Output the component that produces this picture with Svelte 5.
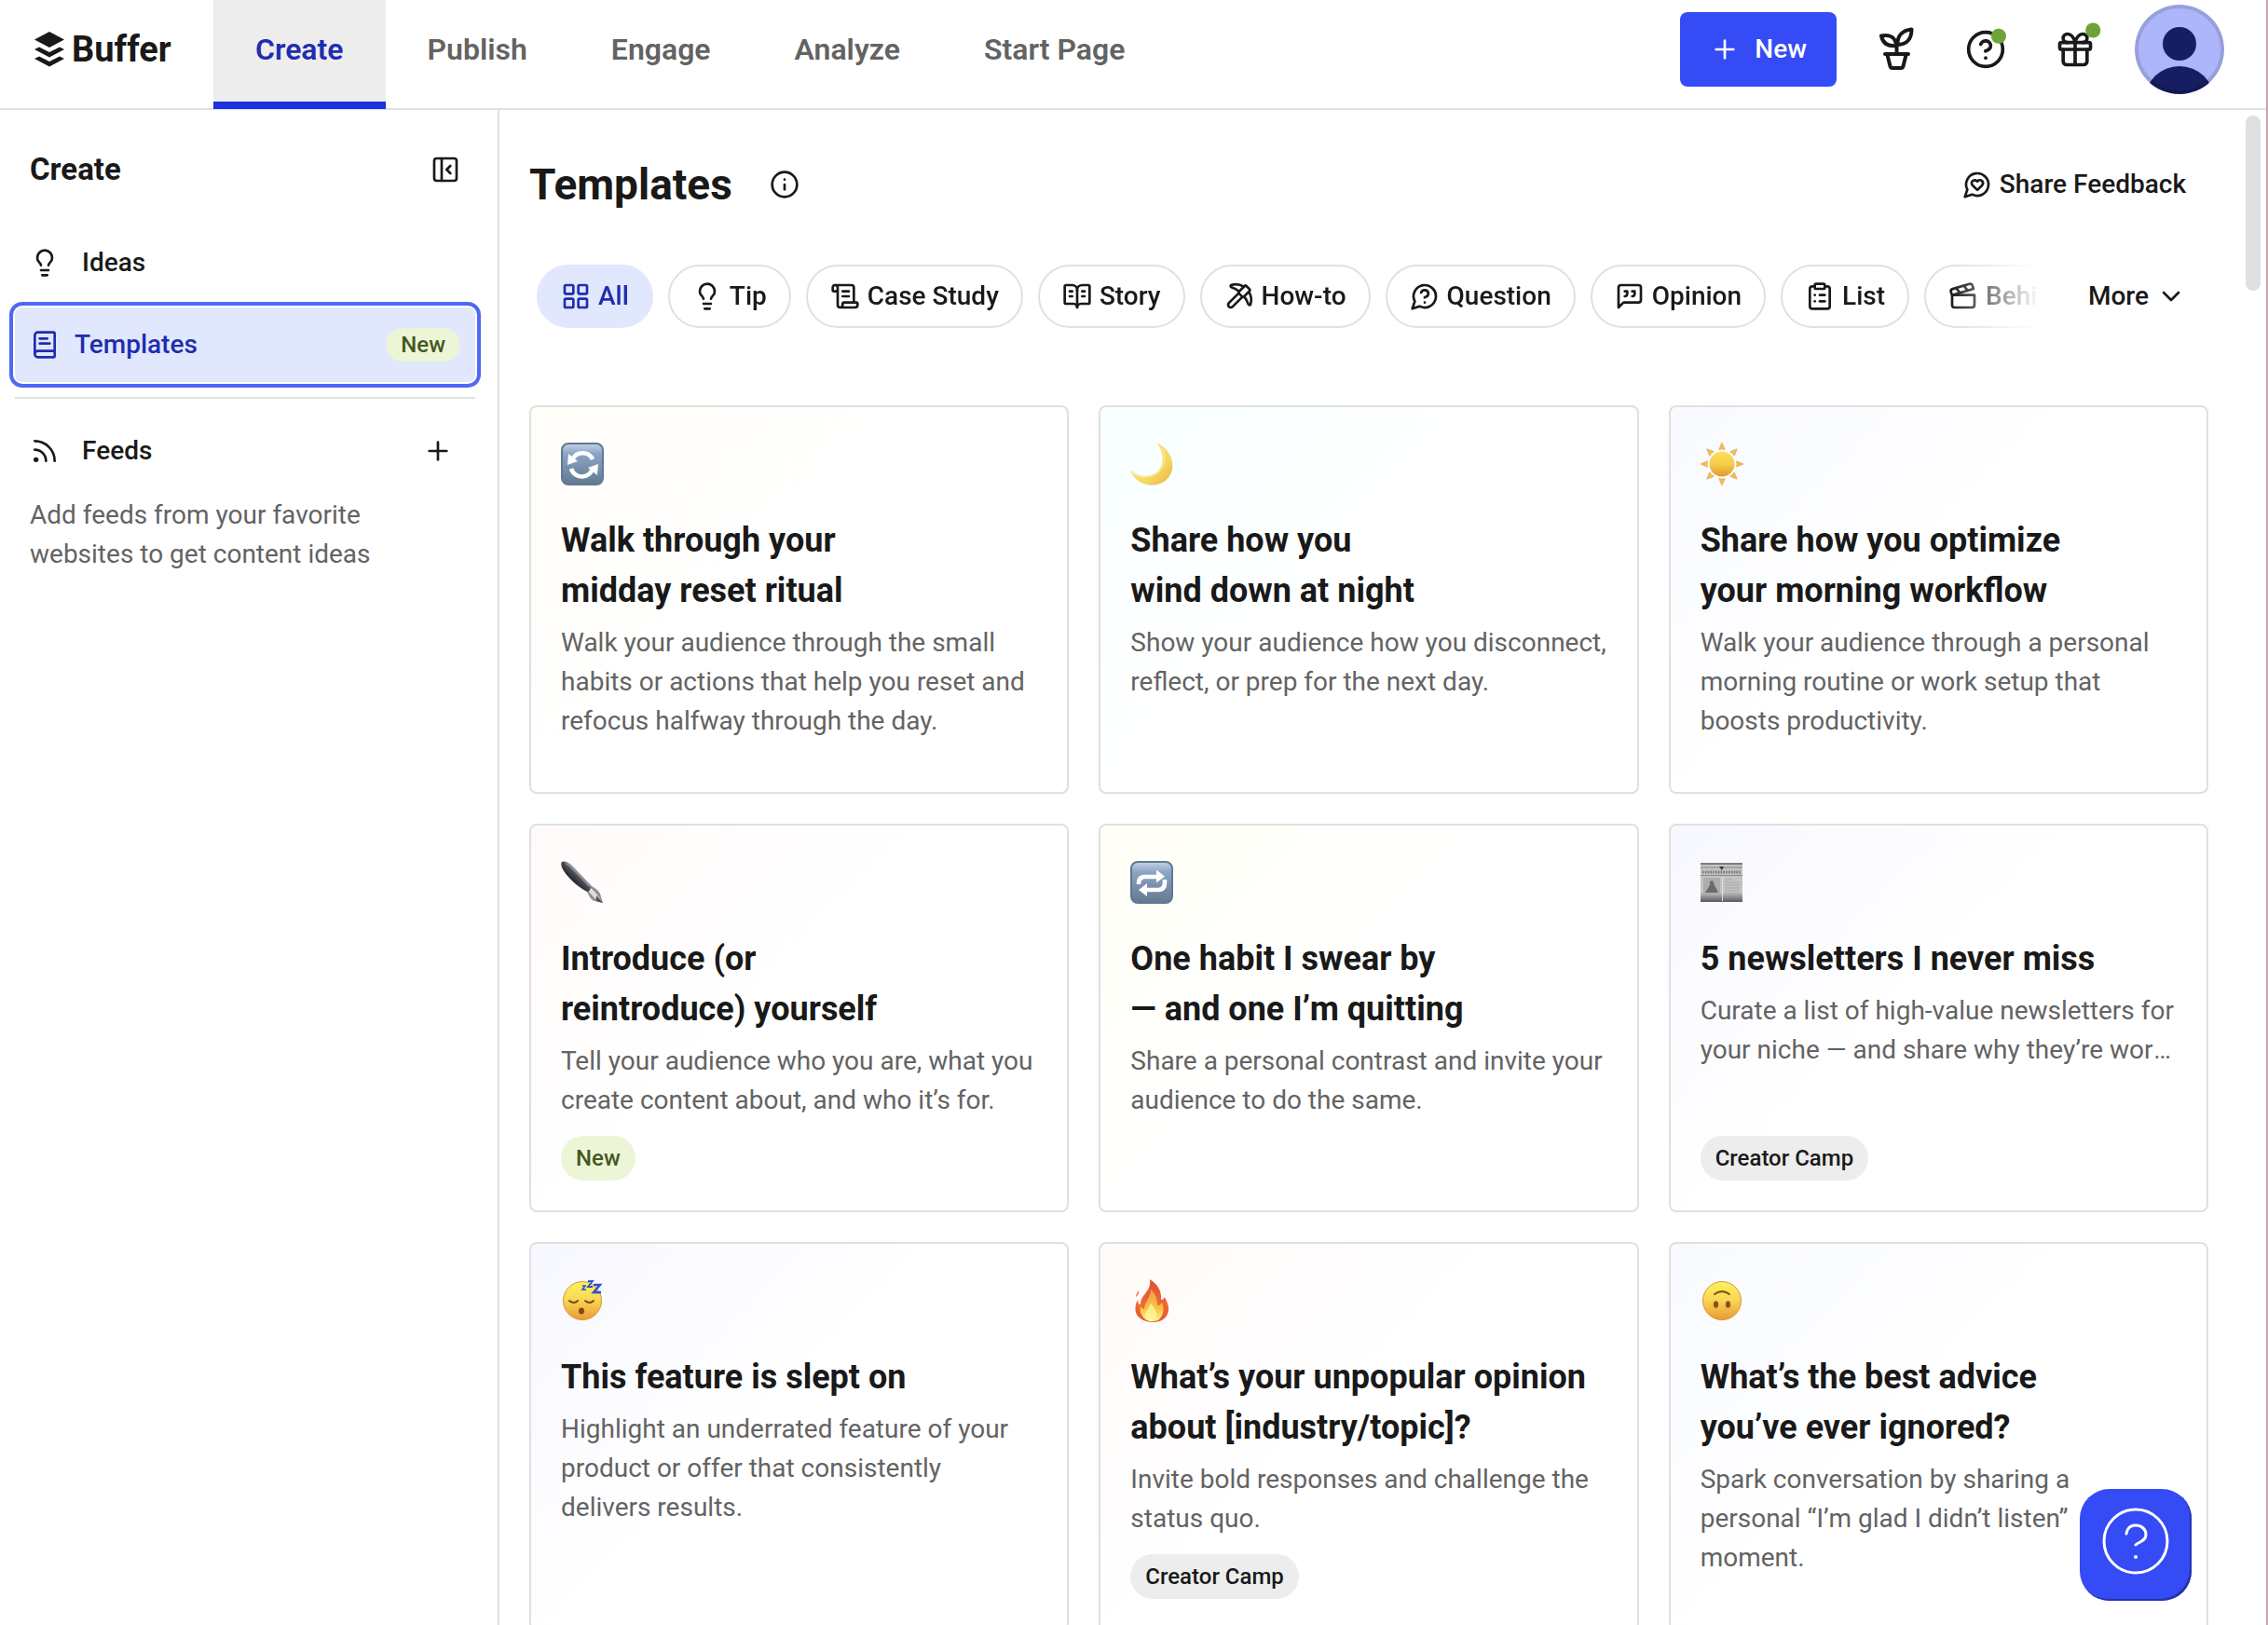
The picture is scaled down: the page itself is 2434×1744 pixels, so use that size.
<script>
  const tabs = ['Create', 'Publish', 'Engage', 'Analyze', 'Start Page'];

  const icons = {
    grid: '<rect x="3" y="3" width="7" height="7" rx="1"/><rect x="14" y="3" width="7" height="7" rx="1"/><rect x="14" y="14" width="7" height="7" rx="1"/><rect x="3" y="14" width="7" height="7" rx="1"/>',
    bulb: '<path d="M15 14c.2-1 .7-1.7 1.5-2.5 1-.9 1.5-2.2 1.5-3.5A6 6 0 0 0 6 8c0 1 .2 2.2 1.5 3.5.7.7 1.3 1.5 1.5 2.5"/><path d="M9 18h6"/><path d="M10 22h4"/>',
    scroll: '<path d="M15 12h-5"/><path d="M15 8h-5"/><path d="M19 17V5a2 2 0 0 0-2-2H4"/><path d="M8 21h12a2 2 0 0 0 2-2v-1a1 1 0 0 0-1-1H11a1 1 0 0 0-1 1v1a2 2 0 1 1-4 0V5a2 2 0 1 0-4 0v2a1 1 0 0 0 1 1h3"/>',
    book: '<path d="M12 7v14"/><path d="M16 12h2"/><path d="M16 8h2"/><path d="M6 12h2"/><path d="M6 8h2"/><path d="M3 18a1 1 0 0 1-1-1V4a1 1 0 0 1 1-1h5a4 4 0 0 1 4 4 4 4 0 0 1 4-4h5a1 1 0 0 1 1 1v13a1 1 0 0 1-1 1h-6a3 3 0 0 0-3 3 3 3 0 0 0-3-3z"/>',
    pickaxe: '<path d="M14.531 12.469 6.619 20.38a1 1 0 1 1-3-3l7.912-7.912"/><path d="M15.686 4.314A12.5 12.5 0 0 0 5.461 2.958 1 1 0 0 0 5.58 4.71a22 22 0 0 1 6.318 3.393"/><path d="M17.7 3.7a1 1 0 0 0-1.4 0l-4.6 4.6a1 1 0 0 0 0 1.4l2.6 2.6a1 1 0 0 0 1.4 0l4.6-4.6a1 1 0 0 0 0-1.4z"/><path d="M19.686 8.314a12.501 12.501 0 0 1 1.356 10.225 1 1 0 0 1-1.751-.119 22 22 0 0 0-3.393-6.319"/>',
    question: '<path d="M7.9 20A9 9 0 1 0 4 16.1L2 22Z"/><path d="M9.09 9a3 3 0 0 1 5.83 1c0 2-3 3-3 3"/><path d="M12 17h.01"/>',
    quote: '<path d="M21 15a2 2 0 0 1-2 2H7l-4 4V5a2 2 0 0 1 2-2h14a2 2 0 0 1 2 2z"/><path d="M8 12a2 2 0 0 0 2-2V8H8"/><path d="M14 12a2 2 0 0 0 2-2V8h-2"/>',
    list: '<rect x="8" y="2" width="8" height="4" rx="1"/><path d="M16 4h2a2 2 0 0 1 2 2v14a2 2 0 0 1-2 2H6a2 2 0 0 1-2-2V6a2 2 0 0 1 2-2h2"/><path d="M12 11h4"/><path d="M12 16h4"/><path d="M8 11h.01"/><path d="M8 16h.01"/>',
    clapper: '<path d="M20.2 6 3 11l-.9-2.4c-.3-1.1.3-2.2 1.3-2.5l13.5-4c1.1-.3 2.2.3 2.5 1.3Z"/><path d="m6.2 5.3 3.1 3.9"/><path d="m12.4 3.4 3.1 4"/><path d="M3 11h18v8a2 2 0 0 1-2 2H5a2 2 0 0 1-2-2Z"/>',
    heart: '<path d="M7.9 20A9 9 0 1 0 4 16.1L2 22Z"/><path d="M15.8 9.2a2.5 2.5 0 0 0-3.5 0l-.3.4-.35-.3a2.42 2.42 0 1 0-3.2 3.6l3.6 3.5 3.6-3.5c1.2-1.2 1.1-2.7.2-3.7"/>',
    chevron: '<path d="m6 9 6 6 6-6"/>',
    info: '<circle cx="12" cy="12" r="10"/><path d="M12 16v-4"/><path d="M12 8h.01"/>',
    collapse: '<rect x="3" y="3" width="18" height="18" rx="2"/><path d="M9 3v18"/><path d="m16 9-3 3 3 3"/>',
    template: '<path d="M4 19.5v-15A2.5 2.5 0 0 1 6.5 2H19a1 1 0 0 1 1 1v18a1 1 0 0 1-1 1H6.5a2.5 2.5 0 0 1-2.5-2.5 2.5 2.5 0 0 1 2.5-2.5H20"/><path d="M8 11h8"/><path d="M8 7h6"/>',
    rss: '<path d="M4 11a9 9 0 0 1 9 9"/><path d="M4 4a16 16 0 0 1 16 16"/><circle cx="5" cy="19" r="1"/>',
    plus: '<path d="M5 12h14"/><path d="M12 5v14"/>',
    gift: '<rect x="3" y="8" width="18" height="4" rx="1"/><path d="M12 8v13"/><path d="M19 12v7a2 2 0 0 1-2 2H7a2 2 0 0 1-2-2v-7"/><path d="M7.5 8a2.5 2.5 0 0 1 0-5A4.8 8 0 0 1 12 8a4.8 8 0 0 1 4.5-5 2.5 2.5 0 0 1 0 5"/>',
    help: '<circle cx="12" cy="12" r="10"/><path d="M9.09 9a3 3 0 0 1 5.83 1c0 2-3 3-3 3"/><path d="M12 17h.01"/>'
  };

  const filters = [
    { label: 'All', icon: 'grid', active: true },
    { label: 'Tip', icon: 'bulb' },
    { label: 'Case Study', icon: 'scroll' },
    { label: 'Story', icon: 'book' },
    { label: 'How-to', icon: 'pickaxe' },
    { label: 'Question', icon: 'question' },
    { label: 'Opinion', icon: 'quote' },
    { label: 'List', icon: 'list' },
    { label: 'Behind', icon: 'clapper' }
  ];

  const cards = [
    { art: 'refresh', tint: 'cream', title: ['Walk through your', 'midday reset ritual'], text: 'Walk your audience through the small habits or actions that help you reset and refocus halfway through the day.' },
    { art: 'moon', tint: 'aqua', title: ['Share how you', 'wind down at night'], text: 'Show your audience how you disconnect, reflect, or prep for the next day.' },
    { art: 'sun', tint: 'sky', title: ['Share how you optimize', 'your morning workflow'], text: 'Walk your audience through a personal morning routine or work setup that boosts productivity.' },
    { art: 'pen', tint: 'rose', title: ['Introduce (or', 'reintroduce) yourself'], text: 'Tell your audience who you are, what you create content about, and who it’s for.', badge: 'New', clamp: true },
    { art: 'repeat', tint: 'lemon', title: ['One habit I swear by', '— and one I’m quitting'], text: 'Share a personal contrast and invite your audience to do the same.' },
    { art: 'news', tint: 'lilac', title: ['5 newsletters I never miss'], text: 'Curate a list of high-value newsletters for your niche — and share why they’re worth following every week.', badge: 'Creator Camp', clamp: true },
    { art: 'sleep', tint: 'lilac', title: ['This feature is slept on'], text: 'Highlight an underrated feature of your product or offer that consistently delivers results.' },
    { art: 'fire', tint: 'rose', title: ['What’s your unpopular opinion', 'about [industry/topic]?'], text: 'Invite bold responses and challenge the status quo.', badge: 'Creator Camp', clamp: true },
    { art: 'upside', tint: 'sky', title: ['What’s the best advice', 'you’ve ever ignored?'], text: 'Spark conversation by sharing a personal “I’m glad I didn’t listen” moment.' }
  ];
</script>

{#snippet icon(name)}
  <svg class="icon" viewBox="0 0 24 24" aria-hidden="true">{@html icons[name]}</svg>
{/snippet}

{#snippet art(name)}
  <svg class="art" viewBox="0 0 46 46" aria-hidden="true">
    {#if name === 'refresh' || name === 'repeat'}
      <defs>
        <linearGradient id="tile-{name}" x1="0" y1="0" x2="0" y2="1">
          <stop offset="0" stop-color="#c3d3e4" /><stop offset=".25" stop-color="#8aa5c5" /><stop offset="1" stop-color="#64788f" />
        </linearGradient>
      </defs>
      <rect x="1" y="1" width="44" height="44" rx="7" fill="url(#tile-{name})" stroke="#5f7896" stroke-width="2" />
      {#if name === 'refresh'}
        <g fill="none" stroke="#fff" stroke-width="4.6">
          <path d="M12 19a12 12 0 0 1 22-1" /><path d="M34 28a12 12 0 0 1-23 0" />
        </g>
        <path d="M8 12l-1 12 11-4z" fill="#fff" /><path d="M39 35l1-12-11 4z" fill="#fff" />
      {:else}
        <g fill="none" stroke="#fff" stroke-width="4.6">
          <path d="M9 25v-1q0-7 7-7h13" /><path d="M37 20v3q0 8-7 8H18" />
        </g>
        <path d="M28 9.500l9 7-9 7z" fill="#fff" /><path d="M18 38l-9-7 9-7z" fill="#fff" />
      {/if}
    {:else if name === 'moon'}
      <defs>
        <linearGradient id="moon" x1="0" y1="0" x2="1" y2="1">
          <stop offset=".3" stop-color="#f7e07c" /><stop offset=".65" stop-color="#f6d85f" /><stop offset="1" stop-color="#e3b04a" />
        </linearGradient>
      </defs>
      <path d="M28.500 0C41 6 47 18 45 29c-2.500 11-13 18-25 16.500C10 44 3 38 0 29.500c9 8 22 9 30 1 7-8 6-20-1.500-30.500z" fill="url(#moon)" />
      <path d="M2 32c9 7 21 6 29-1 6-7 7-17 3-25" fill="none" stroke="#fbf0a8" stroke-width="1.5" opacity=".7" />
    {:else if name === 'sun'}
      <defs>
        <linearGradient id="sun" x1="0" y1="0" x2="0" y2="1">
          <stop offset="0" stop-color="#fbe35b" /><stop offset=".5" stop-color="#f5cd4c" /><stop offset="1" stop-color="#e2962f" />
        </linearGradient>
      </defs>
      <circle cx="23" cy="23" r="13.5" fill="url(#sun)" />
      {#each [0, 45, 90, 135, 180, 225, 270, 315] as angle}
        <path d="M23 0l3.200 7.500q-3.200-1.200-6.400 0z" fill="#f3c044" stroke="#e09a4a" stroke-width=".6" transform="rotate({angle} 23 23)" />
      {/each}
    {:else if name === 'pen'}
      <defs>
        <linearGradient id="pen" x1="0" y1="1" x2="1" y2="0">
          <stop offset=".3" stop-color="#14161a" /><stop offset=".52" stop-color="#4b4f56" /><stop offset=".62" stop-color="#b9bcc2" /><stop offset=".72" stop-color="#26292e" />
        </linearGradient>
      </defs>
      <path d="M1 1C6-1 12 4 17 10l16 17c1 2-2 7-5 6C18 28 5 16 1 7 0 4 0 2 1 1z" fill="url(#pen)" />
      <path d="M5 3c6 2 16 14 25 24" fill="none" stroke="#8b8f96" stroke-width="1.3" />
      <path d="M33 27c3 2 7 4 9 8l3 10-9-2c-4-1-6-6-8-10 3 0 5-3 5-6z" fill="#8d9095" />
      <path d="M32 29c4 3 8 8 12 15-6-2-10-6-14-11z" fill="#dcdde0" />
      <path d="M38 37l7 8-7-2z" fill="#4b4d52" />
    {:else if name === 'news'}
      <defs>
        <linearGradient id="news" x1="0" y1="0" x2="0" y2="1">
          <stop offset="0" stop-color="#c2c2c2" /><stop offset=".75" stop-color="#c4c4c4" /><stop offset="1" stop-color="#5a5a5a" />
        </linearGradient>
      </defs>
      <rect x="0" y="2" width="45" height="42" fill="url(#news)" />
      <path d="M0 3h45" stroke="#666" stroke-width="1.6" />
      <path d="M0 7h45M0 15.500h45" stroke="#858585" stroke-width="1.2" />
      <path d="M2 12h41" stroke="#777" stroke-width="3" stroke-dasharray="1.6 1.2" />
      <path d="M20 6h5l-2 4z" fill="#333" />
      <rect x="3" y="18" width="18" height="17" fill="#adadad" />
      <path d="M5 34l5-8v-4l3-1 2 5 4 8z" fill="#6a6a6a" />
      <path d="M26 20h8M26 23h16M26 26h16M26 29h16M26 32h16M26 35h16" stroke="#a6a6a6" stroke-width="1.1" />
      <path d="M23.500 17v26" stroke="#ddd" stroke-width="1" />
    {:else if name === 'fire'}
      <defs>
        <linearGradient id="fire" x1="0" y1="0" x2="0" y2="1">
          <stop offset="0" stop-color="#e2502f" /><stop offset=".6" stop-color="#ee6a35" /><stop offset="1" stop-color="#ea4f30" />
        </linearGradient>
        <linearGradient id="flame" x1="0" y1="0" x2="0" y2="1">
          <stop offset="0" stop-color="#f39a52" /><stop offset=".6" stop-color="#f8c445" /><stop offset="1" stop-color="#fff58a" />
        </linearGradient>
      </defs>
      <path d="M21 0c8 5 13 12 12 22 2 0 3-1 3.500-3C41 26 43 33 39 39c-3 5-9 7-15 7s-14-3-17-8C4 32 6 25 8 22c0 3 1 5 3 5 0-6 3-9 6-13 3-4 5-8 4-14z" fill="url(#fire)" />
      <path d="M22 11c5 5 7 9 7 17 3 0 4-1 5-3 3 8 1 14-3 18-4 3-12 3-16-1-4-4-5-9-4-13 2 2 3 3 4 3 0-7 7-12 7-21z" fill="url(#flame)" />
      <path d="M22 25c2 4 6 7 6 12 0 5-2 8-6 8s-7-3-6-8c1-4 5-7 6-12z" fill="#fff9a0" opacity=".75" />
      <path d="M9 11c0 3-3 4-3 8 2-2 4-4 3-8z" fill="#ee6a4a" />
    {:else}
      <defs>
        <linearGradient id="face-{name}" x1="0" y1="0" x2="0" y2="1">
          <stop offset="0" stop-color="#fbf05d" /><stop offset=".45" stop-color="#f9d955" /><stop offset="1" stop-color="#e99b35" />
        </linearGradient>
      </defs>
      <circle cx="23" cy="23" r="20.5" fill="url(#face-{name})" stroke="#dc9738" stroke-width="1" />
      {#if name === 'sleep'}
        <g fill="none" stroke="#7a4a12" stroke-width="2" stroke-linecap="round"><path d="M9 23q5 4 9 0" /><path d="M26 23q5 4 9 0" /></g>
        <ellipse cx="22" cy="34" rx="3" ry="3.4" fill="#7a4a12" />
        <g fill="none" stroke="#2a4fd0" stroke-width="2.4"><path d="M35 6h7l-7 8h8" /><path d="M29 2h5l-5 6h5" stroke-width="1.8" /><path d="M23 7h3l-3 4h4" stroke-width="1.5" /></g>
      {:else}
        <path d="M15 16q8-6 16 0" fill="none" stroke="#7a4a12" stroke-width="2" stroke-linecap="round" />
        <ellipse cx="16.5" cy="27" rx="2.6" ry="3.7" fill="#8a5316" /><ellipse cx="29.5" cy="27" rx="2.6" ry="3.7" fill="#8a5316" />
      {/if}
    {/if}
  </svg>
{/snippet}

<div class="app">
  <header>
    <a class="brand" href="#home" aria-label="Buffer home">
      <svg viewBox="0 0 32 38" aria-hidden="true">
        <path d="M16 0 32 8.500 16 17 0 8.500z" />
        <path d="M0 19l5-2.500 11 5.500 11-5.500 5 2.500-16 8.500z" />
        <path d="M0 29l5-2.500 11 5.500 11-5.500 5 2.500-16 8.500z" />
      </svg>
      <span>Buffer</span>
    </a>
    <nav class="tabs" aria-label="Main">
      {#each tabs as tab, i}
        <a href="#{tab}" class:current={i === 0}>{tab}</a>
      {/each}
    </nav>
    <div class="tools">
      <button class="create">{@render icon('plus')}<span>New</span></button>
      <div class="tool-group">
        <button class="tool" aria-label="Streak">
          <svg class="plant" viewBox="0 0 48 48" aria-hidden="true">
            <path d="M12 29h25" /><path d="M14.500 30l3 12q.5 2 2.500 2h9q2 0 2.500-2l3-12" /><path d="M24.500 28v-7" />
            <path d="M8 9.500C17 7.500 23.500 11 24 20 14.500 21 9.500 17 8 9.500z" /><path d="M40.500 2.500C31 3.500 25 9 25.500 19 36 19 40.500 12 40.500 2.500z" />
          </svg>
        </button>
        <button class="tool" aria-label="Help">
          <svg class="icon large" viewBox="0 0 24 24" aria-hidden="true">{@html icons.help}<circle class="dot" cx="19.6" cy="4.2" r="4.4" /></svg>
        </button>
        <button class="tool" aria-label="What’s new">
          <svg class="icon large" viewBox="0 0 24 24" aria-hidden="true">{@html icons.gift}<circle class="dot" cx="22.5" cy=".8" r="4.4" /></svg>
        </button>
      </div>
      <button class="avatar" aria-label="Account">
        <svg viewBox="0 0 96 96" aria-hidden="true">
          <clipPath id="round"><circle cx="48" cy="48" r="48" /></clipPath>
          <g clip-path="url(#round)">
            <rect width="96" height="96" fill="#adb6fa" />
            <circle cx="48" cy="42" r="18" fill="#161d61" />
            <ellipse cx="48" cy="102" rx="37" ry="36" fill="#161d61" />
            <circle cx="48" cy="48" r="46" fill="none" stroke="#000" stroke-opacity=".12" stroke-width="4" />
          </g>
        </svg>
      </button>
    </div>
  </header>

  <div class="body">
    <aside>
      <div class="side-head">
        <h2>Create</h2>
        <button class="plain" aria-label="Collapse sidebar">{@render icon('collapse')}</button>
      </div>
      <nav class="side-nav" aria-label="Create">
        <a href="#ideas">{@render icon('bulb')}<span>Ideas</span></a>
        <a href="#templates" class="selected">{@render icon('template')}<span>Templates</span><em class="badge new">New</em></a>
      </nav>
      <hr />
      <div class="feeds">
        {@render icon('rss')}<span>Feeds</span>
        <button class="plain" aria-label="Add feed">{@render icon('plus')}</button>
      </div>
      <p>Add feeds from your favorite websites to get content ideas</p>
    </aside>

    <main>
      <div class="title-row">
        <h1>Templates</h1>
        <button class="plain" aria-label="About templates">{@render icon('info')}</button>
        <button class="text-button share">{@render icon('heart')}<span>Share Feedback</span></button>
      </div>

      <div class="filter-row">
        <div class="filters">
          {#each filters as f}
            <button class="pill" class:active={f.active}>{@render icon(f.icon)}<span>{f.label}</span></button>
          {/each}
        </div>
        <button class="text-button"><span>More</span>{@render icon('chevron')}</button>
      </div>

      <div class="cards">
        {#each cards as card}
          <article class="card {card.tint}">
            {@render art(card.art)}
            <h3>{#each card.title as line}<span>{line}</span>{/each}</h3>
            <p class:clamp={card.clamp}>{card.text}</p>
            {#if card.badge}
              <em class="badge tall" class:new={card.badge === 'New'}>{card.badge}</em>
            {/if}
          </article>
        {/each}
      </div>
      <div class="thumb"></div>
    </main>
  </div>

  <button class="help" aria-label="Open help">
    <svg viewBox="0 0 72 72" aria-hidden="true">
      <circle cx="36" cy="36" r="34" /><path d="M26 28c1-6 5-9 10-9 6 0 11 4 11 10 0 7-8 8-11 11" /><circle class="point" cx="36" cy="53" r="2" />
    </svg>
  </button>
</div>

<style>
  :global(body) { background: #fff; }
  .app {
    box-sizing: border-box;
    position: relative;
    display: flex;
    flex-direction: column;
    height: 100vh;
    overflow: hidden;
    border-right: 2px solid #c9a3ab;
    color: #191919;
    background: #fff;
    font: 400 28px/42px Roboto, sans-serif;
  }
  .app :global(*) { box-sizing: border-box; }
  h1, h2, h3, p, hr { margin: 0; }
  a { color: inherit; text-decoration: none; }
  em { font-style: normal; }
  button { margin: 0; padding: 0; border: 0; background: none; color: inherit; font: inherit; cursor: pointer; }

  .icon {
    flex: none;
    display: block;
    width: 32px;
    height: 32px;
    overflow: visible;
    fill: none;
    stroke: currentColor;
    stroke-width: 2;
    stroke-linecap: round;
    stroke-linejoin: round;
  }
  .icon.large { width: 44px; height: 44px; }
  .dot { fill: #6ea338; stroke: none; }
  .plain { flex: none; }

  header { flex: none; display: flex; height: 118px; border-bottom: 2px solid #e0e0e0; }
  .brand {
    display: flex;
    align-items: center;
    gap: 8px;
    width: 229px;
    padding: 0 0 10px 37px;
    font-size: 38px;
    font-weight: 700;
  }
  .brand svg { width: 32px; height: 38px; fill: #191919; }
  .tabs { display: flex; height: 117px; }
  .tabs a {
    display: flex;
    align-items: center;
    padding: 0 45px 11px;
    color: #636363;
    font-size: 32px;
    font-weight: 600;
  }
  .tabs .current { background: #ededed; color: #1f2db0; box-shadow: inset 0 -8px #1d31df; }
  .tools { display: flex; align-items: center; gap: 40px; margin-left: auto; padding: 0 45px 10px 0; }
  .tool-group { display: flex; gap: 48px; }
  .create {
    display: flex;
    align-items: center;
    gap: 16px;
    height: 80px;
    padding: 0 32px;
    border-radius: 8px;
    background: #344bf6;
    color: #fff;
    font-weight: 500;
  }
  .tool { display: grid; place-items: center; width: 48px; height: 48px; }
  .plant {
    width: 48px;
    height: 48px;
    fill: none;
    stroke: #191919;
    stroke-width: 4;
    stroke-linecap: round;
    stroke-linejoin: round;
  }
  .avatar { width: 96px; height: 96px; }
  .avatar svg { display: block; }

  .body { flex: 1; display: flex; min-height: 0; }
  aside { flex: none; width: 536px; padding: 32px 24px 0 16px; border-right: 2px solid #e0e0e0; }
  .side-head { display: flex; align-items: center; justify-content: space-between; height: 64px; padding: 0 16px; }
  h2 { font-size: 33px; font-weight: 700; }
  .side-nav { display: grid; gap: 8px; padding: 28px 0 16px; }
  .side-nav a { display: flex; align-items: center; gap: 24px; height: 80px; padding: 0 16px; border-radius: 8px; font-weight: 500; }
  .side-nav .selected {
    gap: 16px;
    background: #e1e7fc;
    color: #1f2db0;
    outline: 4px solid #5068f5;
    outline-offset: 2px;
  }
  .side-nav .badge { margin-left: auto; }
  hr { border: 0; border-top: 2px solid #e0e0e0; }
  .feeds { display: flex; align-items: center; gap: 24px; height: 80px; margin-top: 16px; padding: 0 24px 0 16px; font-weight: 500; }
  .feeds button { margin-left: auto; }
  aside p { padding: 8px 16px; color: #636363; }

  .badge {
    padding: 0 16px;
    border-radius: 24px;
    background: #ededed;
    color: #191919;
    font-size: 24px;
    line-height: 36px;
    font-weight: 500;
  }
  .badge.tall { line-height: 48px; }
  .badge.new { background: #ecf6d7; color: #44581f; }

  main { position: relative; flex: 1; min-width: 0; overflow: hidden; padding: 40px 62px 0 32px; }
  .title-row { display: flex; align-items: center; height: 80px; gap: 40px; }
  h1 { font-size: 46px; font-weight: 700; }
  .text-button { display: flex; align-items: center; gap: 8px; flex: none; padding: 0 24px; font-weight: 500; }
  .share { margin-left: auto; }
  .filter-row { display: flex; gap: 28px; margin: 46px 0 83px; padding-left: 8px; }
  .filters {
    flex: 1;
    display: flex;
    gap: 16px;
    min-width: 0;
    overflow: hidden;
    -webkit-mask-image: linear-gradient(to left, transparent, #000 96px);
    mask-image: linear-gradient(to left, transparent, #000 96px);
  }
  .pill {
    flex: none;
    display: flex;
    align-items: center;
    gap: 8px;
    height: 68px;
    padding: 0 24px;
    border: 2px solid #e0e0e0;
    border-radius: 34px;
    font-weight: 500;
  }
  .pill.active { border-color: #e1e7fc; background: #e1e7fc; color: #1f2db0; }

  .cards { display: grid; grid-template-columns: repeat(3, minmax(0, 1fr)); grid-auto-rows: minmax(417px, auto); gap: 32px; }
  .card {
    display: flex;
    flex-direction: column;
    align-items: flex-start;
    padding: 38px 32px 32px;
    border: 2px solid #e0e0e0;
    border-radius: 8px;
  }
  .cream { background: linear-gradient(135deg, #fffdf8, #fff 45%); }
  .aqua { background: linear-gradient(135deg, #f8ffff, #fff 45%); }
  .sky { background: linear-gradient(135deg, #f8faff, #fff 45%); }
  .rose { background: linear-gradient(135deg, #fffaf9, #fff 45%); }
  .lemon { background: linear-gradient(135deg, #fffff6, #fff 45%); }
  .lilac { background: linear-gradient(135deg, #f7f8ff, #fff 45%); }
  .art { flex: none; width: 46px; height: 46px; margin-bottom: 32px; overflow: visible; }
  h3 { margin-bottom: 8px; font-size: 36px; line-height: 54px; font-weight: 700; }
  h3 span { display: block; }
  .card p { color: #636363; }
  .card .clamp { display: -webkit-box; overflow: hidden; -webkit-box-orient: vertical; -webkit-line-clamp: 2; line-clamp: 2; }
  .card .badge { margin-top: auto; }
  .thumb { position: absolute; top: 6px; right: 6px; width: 16px; height: 188px; border-radius: 8px; background: #dfe0e2; }

  .help {
    position: absolute;
    right: 80px;
    bottom: 26px;
    display: grid;
    place-items: center;
    width: 120px;
    height: 120px;
    padding-bottom: 8px;
    border-radius: 32px;
    background: #344bf6;
    box-shadow: inset -2px -2px #2433a8;
  }
  .help svg { width: 72px; height: 72px; fill: none; stroke: #fff; stroke-width: 3; stroke-linecap: round; }
  .help .point { fill: #fff; stroke: none; }
</style>
